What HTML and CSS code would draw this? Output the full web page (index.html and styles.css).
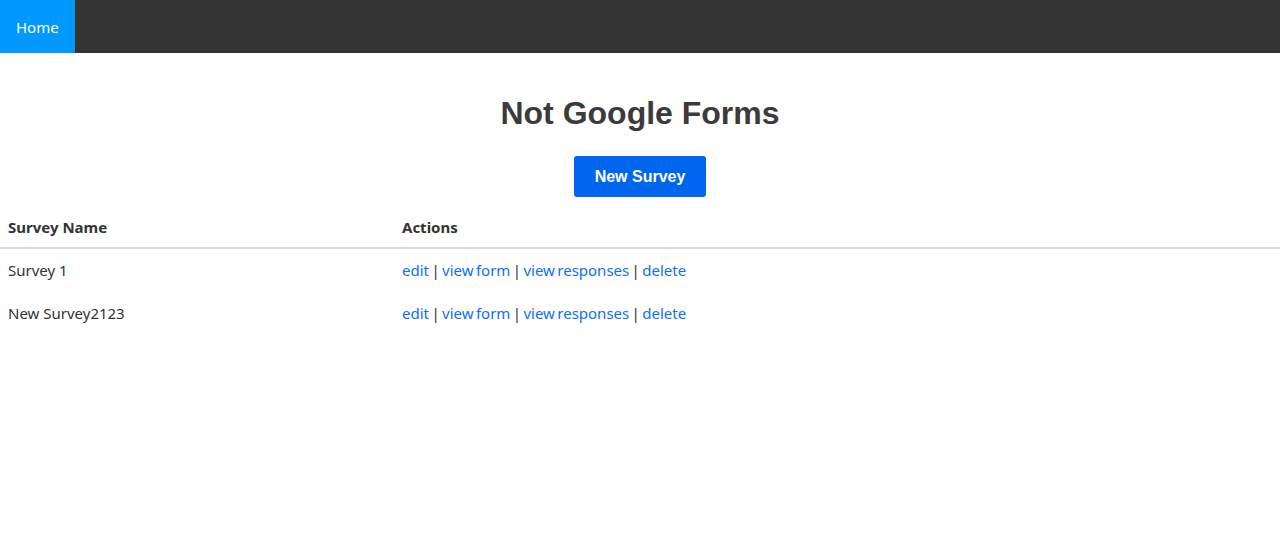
FILE: index.html
```html
<!DOCTYPE html>
<html>
<head>
<meta charset="utf-8">
<link rel="stylesheet" href="styles.css">
</head>
<body>
<nav class="navbar">
  <a class="nav-item active" href="#">Home</a>
</nav>
<main class="main">
  <h1 class="title">Not Google Forms</h1>
  <button class="btn-new">New Survey</button>
  <table class="survey-table">
    <thead>
      <tr><th class="col-name">Survey Name</th><th>Actions</th></tr>
    </thead>
    <tbody>
      <tr>
        <td>Survey 1</td>
        <td class="actions"><a href="#">edit</a> | <a href="#">view form</a> | <a href="#">view responses</a> | <a href="#">delete</a></td>
      </tr>
      <tr>
        <td>New Survey2123</td>
        <td class="actions"><a href="#">edit</a> | <a href="#">view form</a> | <a href="#">view responses</a> | <a href="#">delete</a></td>
      </tr>
    </tbody>
  </table>
</main>
</body>
</html>
```
FILE: styles.css
```css
* { box-sizing: border-box; }
body {
  margin: 0;
  font-family: "Noto Sans", "Open Sans", sans-serif;
  font-size: 15px;
  line-height: 24px;
  color: #333;
  background: #fff;
}
.navbar {
  display: flex;
  height: 53px;
  background: #333;
}
.nav-item {
  display: flex;
  align-items: center;
  padding: 0 16px;
  width: 75px;
  color: #fff;
  text-decoration: none;
  font-size: 15px;
}
.nav-item.active { background: #0099ff; }
.main {
  display: flex;
  flex-direction: column;
  align-items: center;
}
.title {
  margin: 40px 0 0;
  font-family: "Liberation Sans", Arial, sans-serif;
  font-weight: bold;
  font-size: 32px;
  line-height: 40px;
  color: #3b3b3b;
}
.btn-new {
  margin-top: 23px;
  width: 132px;
  height: 41px;
  border: none;
  border-radius: 3px;
  background: #0066ee;
  color: #fff;
  font-family: "Liberation Sans", Arial, sans-serif;
  font-weight: bold;
  font-size: 16px;
}
.survey-table {
  margin-top: 8px;
  width: 100%;
  border-collapse: collapse;
}
.survey-table th {
  text-align: left;
  font-weight: bold;
  padding: 10px 8px 8px;
  border-bottom: 2px solid #dcdcdc;
}
.survey-table .col-name { width: 394px; }
.survey-table td {
  padding: 9px 8px 10px;
}
.survey-table .actions { word-spacing: -1.5px; }
.survey-table a {
  color: #0d6efd;
  text-decoration: none;
}
```
